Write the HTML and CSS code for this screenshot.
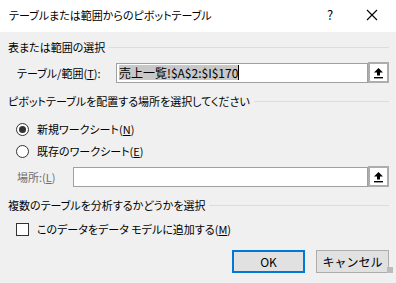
FILE: index.html
```html
<!DOCTYPE html>
<html lang="ja">
<head>
  <meta charset="UTF-8">
  <title>テーブルまたは範囲からのピボットテーブル</title>
  <link rel="stylesheet" href="styles.css">
</head>
<body>
  <div class="dialog">
    <div class="titlebar">
      <span class="title">テーブルまたは範囲からのピボットテーブル</span>
      <span class="help">?</span>
      <span class="close">
        <svg width="12" height="12" viewBox="0 0 12 12"><path d="M1 1 L11 11 M11 1 L1 11" stroke="#000" stroke-width="1.1"/></svg>
      </span>
    </div>

    <div class="content">
      <div class="group-head g1"><span>表または範囲の選択</span><i></i></div>
      <div class="row field-row">
        <label class="lbl-range">テーブル/範囲(<u>T</u>):</label>
        <div class="input"><span class="sel">売上一覧!$A$2:$I$170</span><span class="caret"></span></div>
        <div class="pick">
          <svg width="11" height="12" viewBox="0 0 11 12"><polygon points="5.5,1 10,5.5 7,5.5 7,8.5 4,8.5 4,5.5 1,5.5" fill="#000"/><rect x="1" y="10" width="9" height="1.4" fill="#000"/></svg>
        </div>
      </div>

      <div class="group-head g2"><span>ピボットテーブルを配置する場所を選択してください</span><i></i></div>
      <div class="row option r1"><span class="radio checked"></span>新規ワークシート(<u>N</u>)</div>
      <div class="row option r2"><span class="radio"></span>既存のワークシート(<u>E</u>)</div>
      <div class="row field-row loc">
        <label class="lbl-loc">場所:(<u>L</u>)</label>
        <div class="input"></div>
        <div class="pick">
          <svg width="11" height="12" viewBox="0 0 11 12"><polygon points="5.5,1 10,5.5 7,5.5 7,8.5 4,8.5 4,5.5 1,5.5" fill="#000"/><rect x="1" y="10" width="9" height="1.4" fill="#000"/></svg>
        </div>
      </div>

      <div class="group-head g3"><span>複数のテーブルを分析するかどうかを選択</span><i></i></div>
      <div class="row option r3"><span class="check"></span>このデータをデータ モデルに追加する(<u>M</u>)</div>

      <div class="buttons">
        <button class="btn default">OK</button>
        <button class="btn">キャンセル</button>
      </div>
    </div>
    <span class="grip"></span>
  </div>
</body>
</html>
```

FILE: styles.css
```css
html, body { margin: 0; padding: 0; }
body { width: 396px; height: 283px; overflow: hidden; background: #f0f0f0; font-family: "Noto Sans CJK JP", "Noto Sans", sans-serif; font-size: 11px; line-height: 16px; color: #000; font-feature-settings: "palt"; }
u { text-decoration: underline; text-underline-offset: 1px; }

.dialog { position: relative; height: 283px; }
.titlebar { height: 32px; background: #fff; display: flex; align-items: center; padding-left: 9px; }
.title { flex: 1; margin-top: -2px; }
.help { width: 20px; text-align: center; margin-right: 26px; font-size: 13px; margin-top: -3px; }
.close { width: 12px; margin-right: 18px; margin-top: -3px; display: flex; }

.content { padding: 0 7px 0 8px; }
.group-head { display: flex; align-items: center; height: 20px; white-space: nowrap; }
.group-head i { flex: 1; border-top: 1px solid #dcdcdc; margin-left: 4px; }
.g1 { margin-top: 5px; }
.g2 { margin-top: 8px; }
.g3 { margin-top: 8px; }

.row { display: flex; align-items: center; white-space: nowrap; }
.field-row { height: 21px; margin-top: 5px; }
.lbl-range { width: 108px; padding-left: 9px; box-sizing: border-box; }
.lbl-loc { width: 65px; padding-left: 9px; box-sizing: border-box; color: #6d6d6d; }
.input { flex: 1; height: 20px; box-sizing: border-box; border: 1px solid #a0a0a0; background: #fff; display: flex; align-items: center; padding-left: 2px; }
.sel { background: #c8c8c8; line-height: 15px; font-size: 12px; }
.caret { width: 1px; height: 15px; background: #000; }
.pick { width: 21px; height: 21px; box-sizing: border-box; border: 2px solid #adadad; background: #fff; display: flex; align-items: center; justify-content: center; }

.option { height: 20px; padding-left: 8px; }
.r1 { margin-top: 8px; }
.r2 { margin-top: 2px; }
.loc { margin-top: 5px; }
.r3 { margin-top: 4px; }
.radio { width: 13px; height: 13px; box-sizing: border-box; border: 1px solid #333; border-radius: 50%; background: #fff; margin: 0 8px 0 0; position: relative; }
.radio.checked::after { content: ""; position: absolute; left: 2px; top: 2px; width: 7px; height: 7px; border-radius: 50%; background: #333; }
.check { width: 13px; height: 13px; box-sizing: border-box; border: 1px solid #333; background: #fff; margin-right: 8px; }

.buttons { display: flex; justify-content: flex-end; gap: 11px; margin-top: 11px; }
.btn { width: 73px; height: 23px; box-sizing: border-box; border: 1px solid #adadad; background: #e1e1e1; font-family: inherit; font-size: 12px; padding: 0; color: #000; }
.btn.default { border: 2px solid #0078d7; }
.grip { position: absolute; right: 3px; bottom: 10px; width: 6px; height: 6px; background: radial-gradient(circle, #bcbcbc 0.8px, transparent 1px) 0 0 / 2px 2px; }
```
